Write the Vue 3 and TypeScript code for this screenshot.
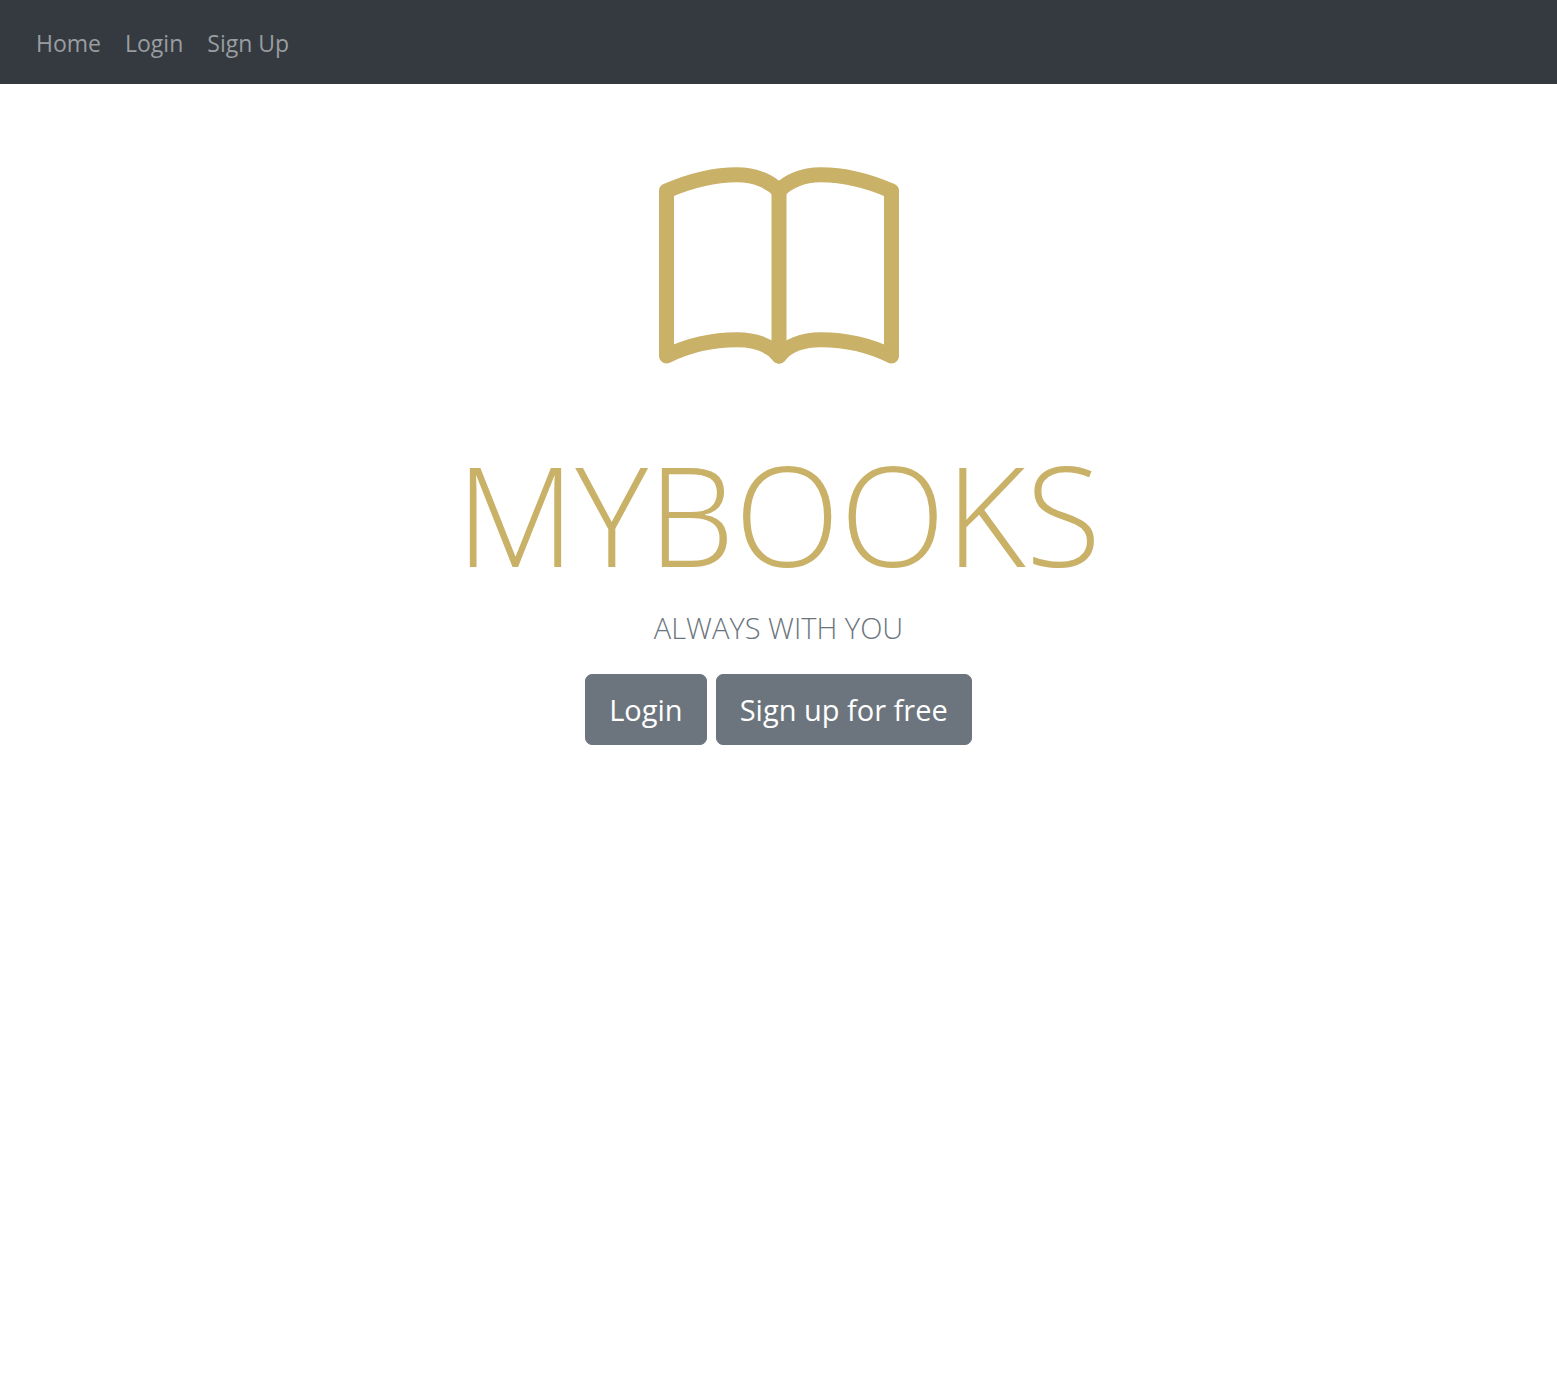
<script setup lang="ts">
interface NavLink {
  label: string
  href: string
}

const links: NavLink[] = [
  { label: 'Home', href: '#home' },
  { label: 'Login', href: '#login' },
  { label: 'Sign Up', href: '#signup' },
]
</script>

<template>
  <nav class="navbar" aria-label="Main">
    <a v-for="link in links" :key="link.label" class="nav-link" :href="link.href">{{ link.label }}</a>
  </nav>
  <main class="hero">
    <svg class="book" viewBox="0 0 240 240" aria-hidden="true">
      <g fill="none" stroke="currentColor" stroke-width="15" stroke-linejoin="round" stroke-linecap="round">
        <path d="M120 45C112 36 97 28.8 78 28.8C60 28.8 34 33.5 7.5 45V210C34 197 60 193.8 78 193.8C97 193.8 112 200 120 210" />
        <path d="M120 45C128 36 143 28.8 162 28.8C180 28.8 206 33.5 232.5 45V210C206 197 180 193.8 162 193.8C143 193.8 128 200 120 210" />
        <path d="M120 46V210" />
      </g>
    </svg>
    <h1 class="title">MYBOOKS</h1>
    <p class="tagline">ALWAYS WITH YOU</p>
    <div class="actions">
      <button class="btn" type="button">Login</button>
      <button class="btn" type="button">Sign up for free</button>
    </div>
  </main>
</template>

<style>
body {
  margin: 0;
  background: #fff;
  font-family: "Segoe UI", "Open Sans", "Noto Sans", sans-serif;
}
</style>

<style scoped>
.navbar {
  display: flex;
  padding: 12px 24px;
  background: #343a40;
}

.nav-link {
  padding: 13px 12px 11px;
  color: #9a9da0;
  font-size: 23px;
  line-height: 36px;
  text-decoration: none;
}

.hero {
  display: flex;
  flex-direction: column;
  align-items: center;
  padding: 62px 24px 48px;
}

.book {
  width: 240px;
  height: 240px;
  color: #c9b168;
}

.title {
  margin: 35px 0 0;
  color: #c9b168;
  font-size: 138px;
  font-weight: 300;
  line-height: 184px;
}

.tagline {
  margin: 0 0 24px;
  color: #6c757d;
  font-size: 29px;
  font-weight: 300;
  line-height: 45px;
}

.actions {
  display: flex;
  gap: 9px;
}

.btn {
  padding: 12px 23px;
  border: 1px solid #6c757d;
  border-radius: 7px;
  background: #6c757d;
  color: #fff;
  font-family: inherit;
  font-size: 29px;
  line-height: 45px;
  cursor: pointer;
}
</style>
